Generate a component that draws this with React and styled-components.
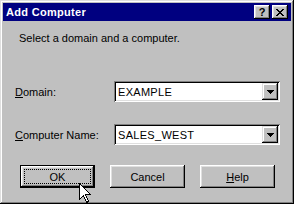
import React from 'react';
import styled, { createGlobalStyle } from 'styled-components';

const GlobalStyle = createGlobalStyle`
  html, body {
    margin: 0;
    padding: 0;
    background: #c0c0c0;
  }
  body {
    font-family: "Liberation Sans", Arial, sans-serif;
    font-size: 11px;
  }
`;

const Window = styled.div`
  position: relative;
  width: 294px;
  height: 204px;
  box-sizing: border-box;
  padding: 3px;
  background: #c0c0c0;
  box-shadow: inset -1px -1px #000, inset 1px 1px #dfdfdf,
    inset -2px -2px #808080, inset 2px 2px #fff;
  display: flex;
  flex-direction: column;
  overflow: hidden;
`;

const TitleBar = styled.div`
  height: 18px;
  background: #000080;
  display: flex;
  align-items: center;
  justify-content: space-between;
  padding: 0 3px 0 3px;
`;

const Title = styled.span`
  color: #fff;
  font-weight: bold;
  font-size: 11px;
  letter-spacing: 0.3px;
`;

const CaptionButtons = styled.div`
  display: flex;
  gap: 2px;
`;

const CaptionButton = styled.div`
  width: 16px;
  height: 14px;
  box-sizing: border-box;
  background: #c0c0c0;
  box-shadow: inset -1px -1px #000, inset 1px 1px #fff,
    inset -2px -2px #808080, inset 2px 2px #dfdfdf;
  display: flex;
  align-items: center;
  justify-content: center;
  font-weight: bold;
  font-size: 11px;
  color: #000;
  line-height: 1;
`;

const Body = styled.div`
  padding: 11px 0 0 12px;
`;

const Prompt = styled.div`
  line-height: 13px;
  padding-left: 4px;
  color: #000;
`;

const Fields = styled.div`
  display: grid;
  grid-template-columns: 99px 166px;
  grid-auto-rows: 21px;
  row-gap: 22px;
  margin-top: 36px;
  align-items: center;
`;

const Label = styled.span`
  color: #000;
  u { text-decoration: underline; }
`;

const Combo = styled.div`
  height: 21px;
  box-sizing: border-box;
  background: #fff;
  box-shadow: inset 1px 1px #808080, inset -1px -1px #fff,
    inset 2px 2px #000, inset -2px -2px #dfdfdf;
  display: flex;
  align-items: center;
  padding: 2px;
`;

const ComboText = styled.span`
  flex: 1;
  padding-left: 2px;
  color: #000;
  font-size: 11px;
  letter-spacing: 0.3px;
`;

const DropButton = styled.div`
  width: 16px;
  height: 17px;
  box-sizing: border-box;
  background: #c0c0c0;
  box-shadow: inset -1px -1px #000, inset 1px 1px #dfdfdf,
    inset -2px -2px #808080, inset 2px 2px #fff;
  display: flex;
  align-items: center;
  justify-content: center;
`;

const Buttons = styled.div`
  display: flex;
  gap: 15px;
  margin-top: 20px;
  padding-left: 5px;
`;

const Button = styled.div`
  position: relative;
  width: 75px;
  height: 23px;
  box-sizing: border-box;
  background: #c0c0c0;
  color: #000;
  display: flex;
  align-items: center;
  justify-content: center;
  font-size: 11px;
  box-shadow: ${(p) =>
    p.$default
      ? 'inset 0 0 0 1px #000, inset -2px -2px #000, inset 2px 2px #fff, inset -3px -3px #808080, inset 3px 3px #dfdfdf'
      : 'inset -1px -1px #000, inset 1px 1px #fff, inset -2px -2px #808080, inset 2px 2px #dfdfdf'};
`;

const FocusRing = styled.span`
  position: absolute;
  inset: 4px;
  border: 1px dotted #000;
`;

const Cursor = styled.svg`
  position: absolute;
  left: 79px;
  top: 183px;
`;

const Arrow = () => (
  <svg width="7" height="4" viewBox="0 0 7 4" shapeRendering="crispEdges">
    <path d="M0 0h7v1H0zM1 1h5v1H1zM2 2h3v1H2zM3 3h1v1H3z" fill="#000" />
  </svg>
);

const App = () => (
  <>
    <GlobalStyle />
    <Window>
      <TitleBar>
        <Title>Add Computer</Title>
        <CaptionButtons>
          <CaptionButton>?</CaptionButton>
          <CaptionButton>
            <svg width="8" height="7" viewBox="0 0 8 7" shapeRendering="crispEdges">
              <path
                d="M0 0h2v1H0zM6 0h2v1H6zM1 1h2v1H1zM5 1h2v1H5zM2 2h4v1H2zM3 3h2v1H3zM2 4h4v1H2zM1 5h2v1H1zM5 5h2v1H5zM0 6h2v1H0zM6 6h2v1H6z"
                fill="#000"
              />
            </svg>
          </CaptionButton>
        </CaptionButtons>
      </TitleBar>
      <Body>
        <Prompt>Select a domain and a computer.</Prompt>
        <Fields>
          <Label><u>D</u>omain:</Label>
          <Combo>
            <ComboText>EXAMPLE</ComboText>
            <DropButton><Arrow /></DropButton>
          </Combo>
          <Label><u>C</u>omputer Name:</Label>
          <Combo>
            <ComboText>SALES_WEST</ComboText>
            <DropButton><Arrow /></DropButton>
          </Combo>
        </Fields>
        <Buttons>
          <Button $default>
            OK
            <FocusRing />
          </Button>
          <Button>Cancel</Button>
          <Button><span><u>H</u>elp</span></Button>
        </Buttons>
      </Body>
      <Cursor width="13" height="20" viewBox="0 0 13 20" shapeRendering="crispEdges">
        <path
          d="M0.5 0.5 V16.5 L4.5 12.5 L7.5 19.5 L9.5 18.5 L6.5 11.5 H11.5 Z"
          fill="#fff"
          stroke="#000"
          strokeWidth="1"
        />
      </Cursor>
    </Window>
  </>
);

export default App;
